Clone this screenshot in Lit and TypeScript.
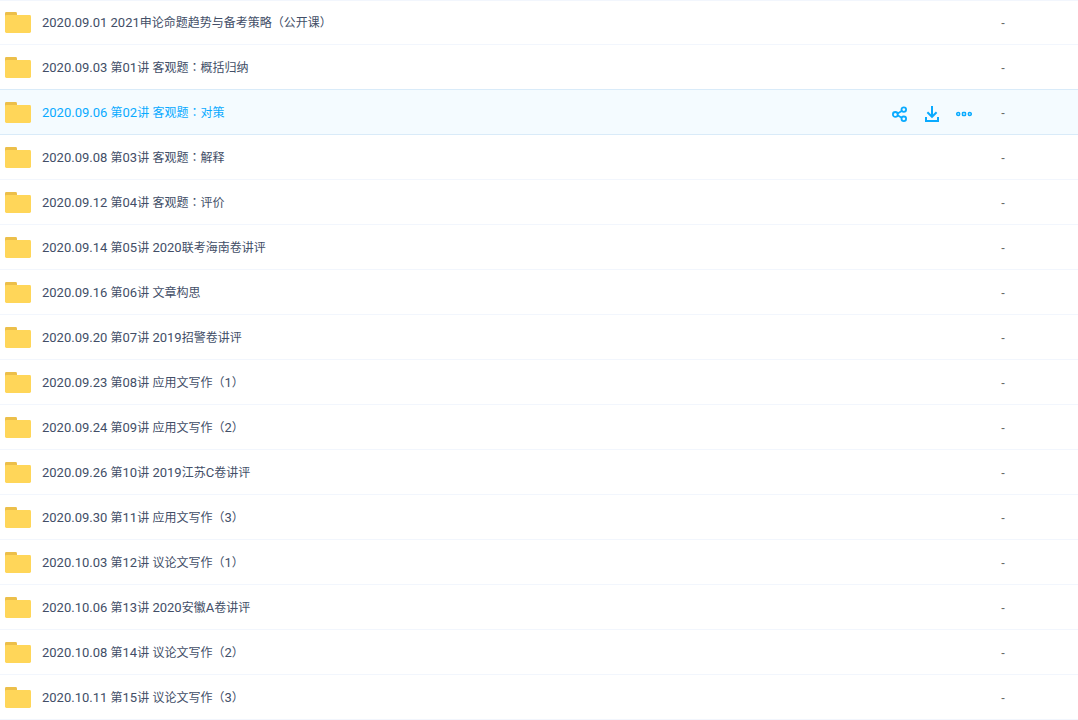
import { LitElement, html, css, svg, nothing } from "lit";
import { customElement, property } from "lit/decorators.js";

interface Entry {
  name: string;
  size: string;
  active?: boolean;
}

const entries: Entry[] = [
  { name: "2020.09.01 2021申论命题趋势与备考策略（公开课）", size: "-" },
  { name: "2020.09.03 第01讲 客观题：概括归纳", size: "-" },
  { name: "2020.09.06 第02讲 客观题：对策", size: "-", active: true },
  { name: "2020.09.08 第03讲 客观题：解释", size: "-" },
  { name: "2020.09.12 第04讲 客观题：评价", size: "-" },
  { name: "2020.09.14 第05讲 2020联考海南卷讲评", size: "-" },
  { name: "2020.09.16 第06讲 文章构思", size: "-" },
  { name: "2020.09.20 第07讲 2019招警卷讲评", size: "-" },
  { name: "2020.09.23 第08讲 应用文写作（1）", size: "-" },
  { name: "2020.09.24 第09讲 应用文写作（2）", size: "-" },
  { name: "2020.09.26 第10讲 2019江苏C卷讲评", size: "-" },
  { name: "2020.09.30 第11讲 应用文写作（3）", size: "-" },
  { name: "2020.10.03 第12讲 议论文写作（1）", size: "-" },
  { name: "2020.10.06 第13讲 2020安徽A卷讲评", size: "-" },
  { name: "2020.10.08 第14讲 议论文写作（2）", size: "-" },
  { name: "2020.10.11 第15讲 议论文写作（3）", size: "-" },
];

const shapes = {
  share: svg`
    <g fill="none" stroke="currentColor" stroke-width="1.8">
      <circle cx="3.3" cy="8.4" r="2.4" />
      <circle cx="11.8" cy="3.6" r="2.3" />
      <circle cx="11.8" cy="12.8" r="2.3" />
      <path d="M5.6 7.4L9.7 4.9M5.6 9.3L9.7 11.7" />
    </g>`,
  download: svg`
    <path d="M8 0v11M3.4 6.2L8 10.8L12.6 6.2M2 11v4h12v-4"
      fill="none" stroke="currentColor" stroke-width="2" />`,
  more: svg`
    <g fill="none" stroke="currentColor" stroke-width="1.5">
      <circle cx="2.2" cy="8" r="1.5" />
      <rect x="6.5" y="6.5" width="3" height="3" rx="0.6" />
      <circle cx="13.8" cy="8" r="1.5" />
    </g>`,
};

/** Splits a file name into Latin runs, full-width colons and Chinese text. */
const runs = (name: string) => name.match(/[\x20-\x7e]+|：|[^\x20-\x7e：]+/g) ?? [];

@customElement("file-name")
class FileName extends LitElement {
  static styles = css`
    :host {
      display: block;
      white-space: pre;
    }
    .latin {
      font-family: Roboto, sans-serif;
      font-size: 13px;
    }
    .colon {
      font-family: "Noto Sans CJK TC", sans-serif;
      line-height: 12px;
    }
  `;

  @property() name = "";

  render() {
    return runs(this.name).map((run) => {
      if (run === "：") return html`<span class="colon" lang="zh-TW">${run}</span>`;
      if (/^[\x20-\x7e]/.test(run)) return html`<span class="latin">${run}</span>`;
      return html`<span>${run}</span>`;
    });
  }
}

@customElement("app-root")
class AppRoot extends LitElement {
  static styles = css`
    :host {
      display: block;
      background: #fff;
      color: #424e67;
      font: 12px/20px "Liberation Sans", "Noto Sans CJK SC", sans-serif;
    }
    table {
      width: 100%;
      border-spacing: 0;
      box-shadow: inset 0 1px #f2f6fd;
    }
    td {
      box-sizing: border-box;
      height: 45px;
      padding: 0;
      border-bottom: 1px solid #f2f6fd;
      vertical-align: middle;
    }
    .name {
      display: flex;
      align-items: center;
      gap: 11px;
      padding-left: 5px;
      color: inherit;
      text-decoration: none;
    }
    .folder {
      flex: none;
      display: block;
    }
    .label {
      padding-top: 2px;
    }
    .tools {
      width: 109px;
    }
    .actions {
      display: flex;
      gap: 16px;
      padding-top: 4px;
    }
    button {
      display: block;
      width: 16px;
      height: 16px;
      padding: 0;
      border: 0;
      background: none;
      color: inherit;
      cursor: pointer;
    }
    .icon {
      display: block;
    }
    .size {
      width: 77px;
      padding-top: 2px;
      color: #666;
    }
    .active {
      color: #09aaff;
      background: #f4fbff;
    }
    .active td,
    tr:has(+ .active) td {
      border-color: #d9ebf9;
    }
  `;

  private tool(label: string, shape: unknown) {
    return html`<button type="button" aria-label=${label} title=${label}>
      <svg class="icon" width="16" height="16" viewBox="0 0 16 16" aria-hidden="true">${shape}</svg>
    </button>`;
  }

  private row(entry: Entry) {
    return html`<tr class=${entry.active ? "active" : ""}>
      <td>
        <a class="name" href="#">
          <svg class="folder" width="26" height="21" viewBox="0 0 26 21" aria-hidden="true">
            <path d="M0 6V1.2Q0 0 1.2 0H10.6Q12 0 12 1.4V6Z" fill="#ecbf4a" />
            <rect y="3" width="26" height="18" rx="1.4" fill="#ffd659" />
          </svg>
          <file-name class="label" .name=${entry.name}></file-name>
        </a>
      </td>
      <td class="tools">
        ${entry.active
          ? html`<div class="actions">
              ${this.tool("分享", shapes.share)} ${this.tool("下载", shapes.download)}
              ${this.tool("更多", shapes.more)}
            </div>`
          : nothing}
      </td>
      <td class="size">${entry.size}</td>
    </tr>`;
  }

  render() {
    return html`<table>
      <tbody>
        ${entries.map((entry) => this.row(entry))}
      </tbody>
    </table>`;
  }
}
